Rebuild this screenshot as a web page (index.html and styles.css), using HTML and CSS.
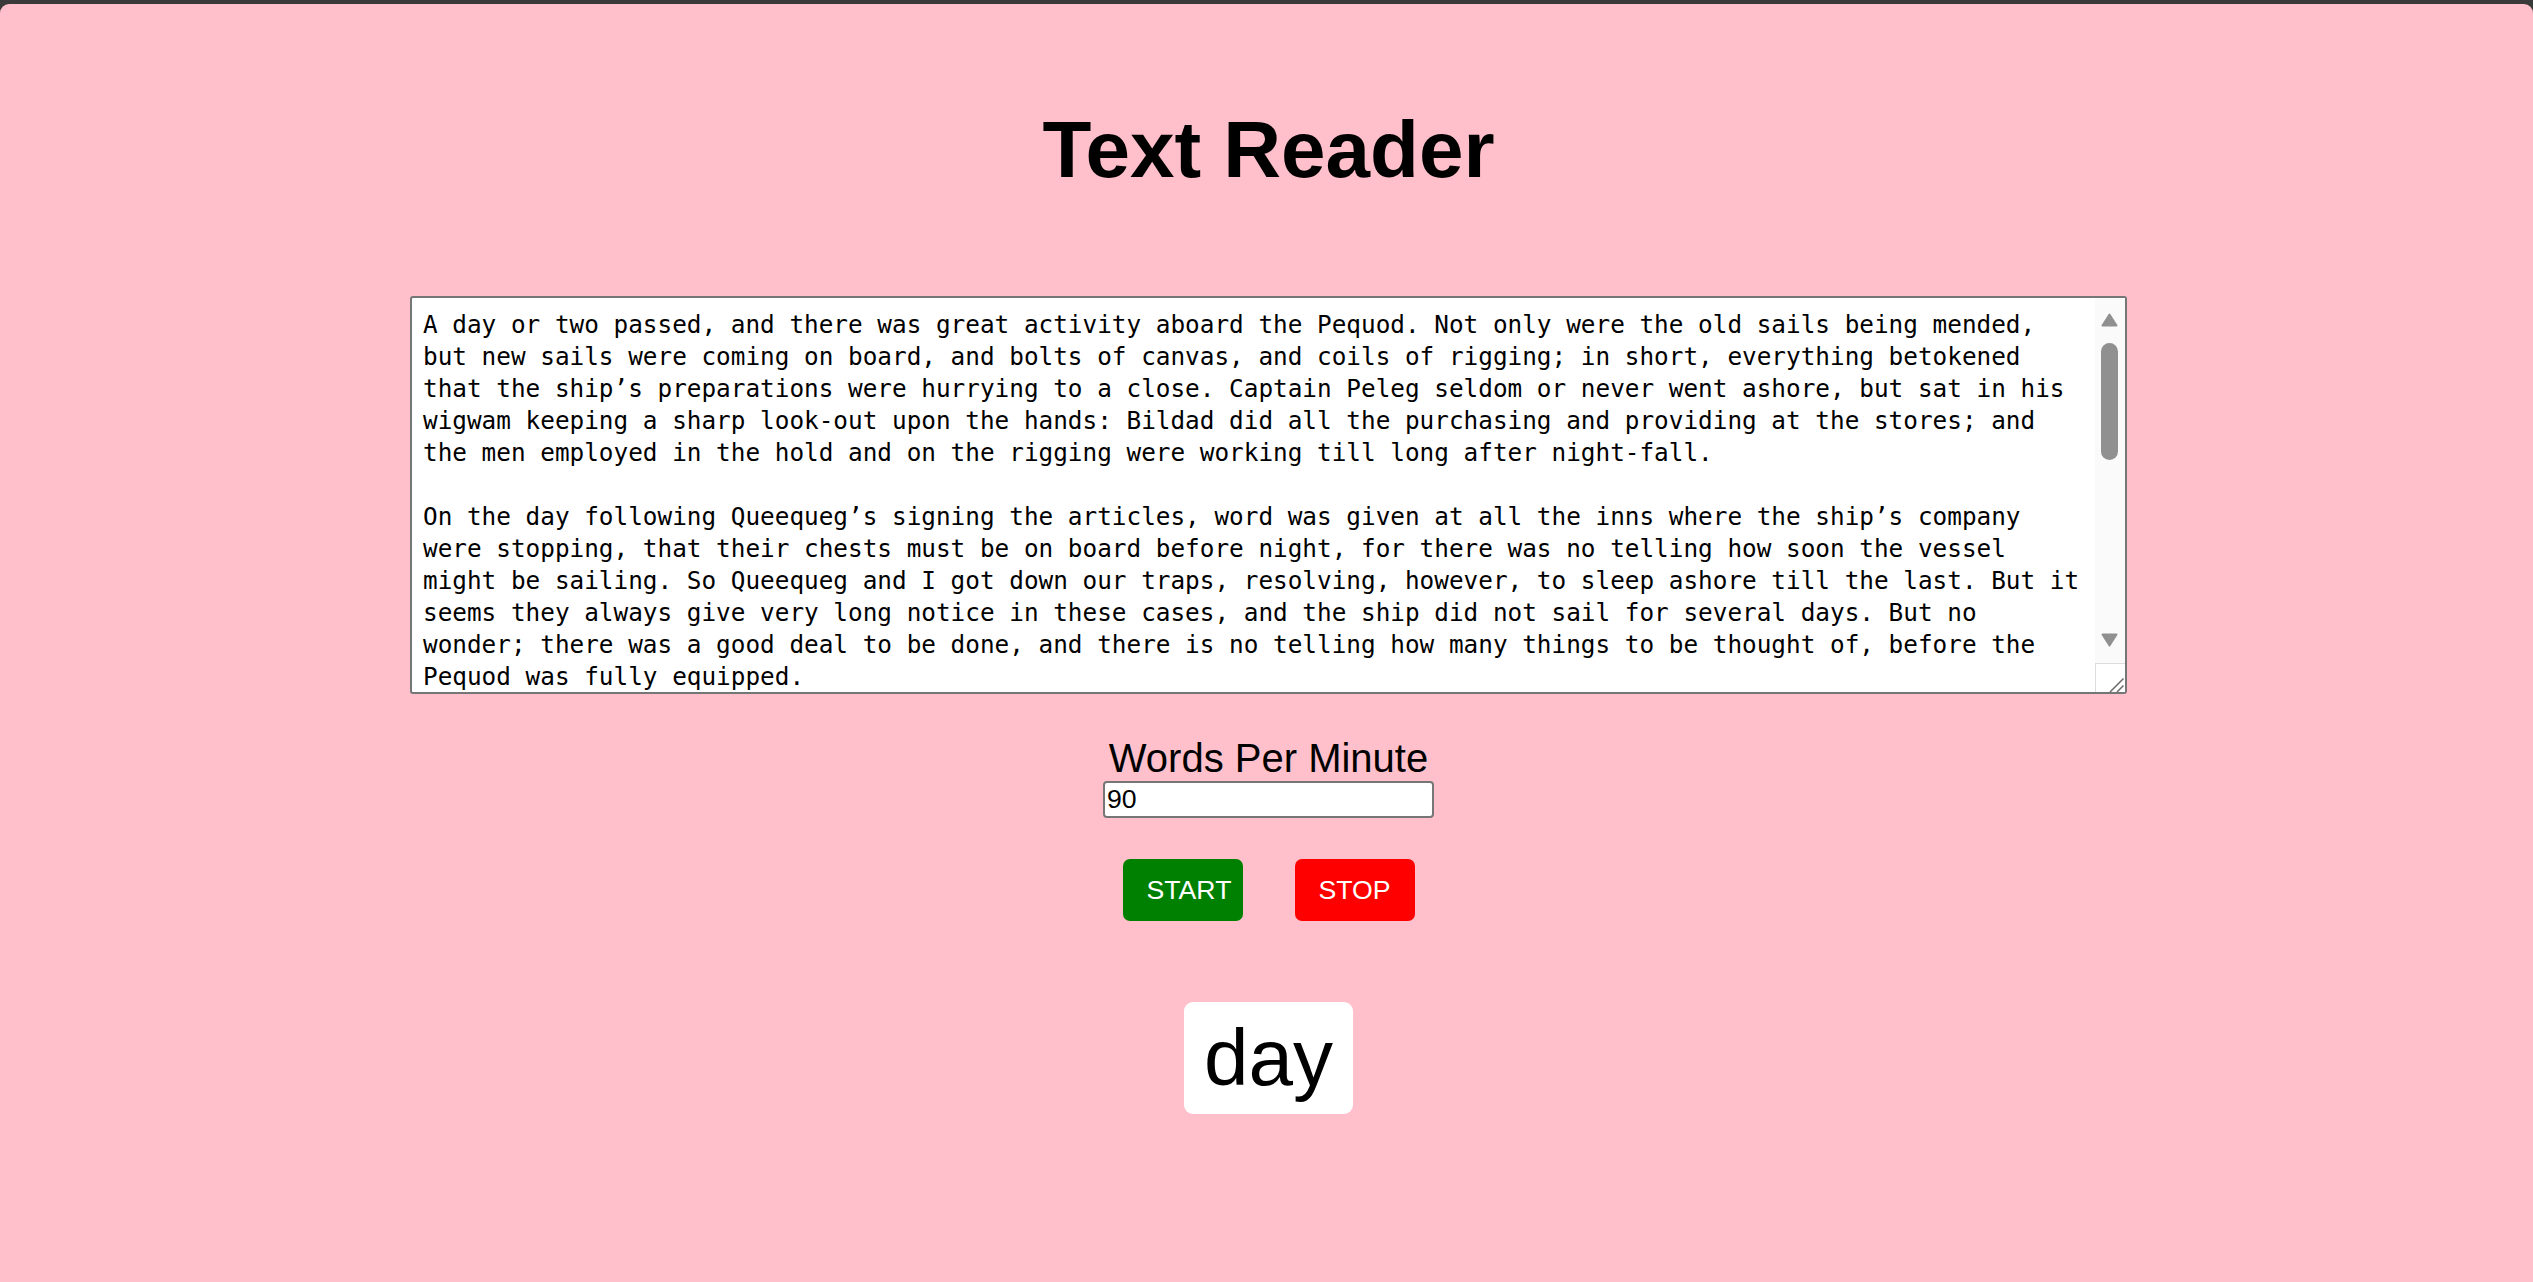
FILE: index.html
```html
<!DOCTYPE html>
<html lang="en">
<head>
<meta charset="utf-8">
<title>Text Reader</title>
<link rel="stylesheet" href="styles.css">
</head>
<body>
<main class="page">
  <h1 class="title">Text Reader</h1>
  <div class="editor">
    <textarea class="source" spellcheck="false">A day or two passed, and there was great activity aboard the Pequod. Not only were the old sails being mended, but new sails were coming on board, and bolts of canvas, and coils of rigging; in short, everything betokened that the ship’s preparations were hurrying to a close. Captain Peleg seldom or never went ashore, but sat in his wigwam keeping a sharp look-out upon the hands: Bildad did all the purchasing and providing at the stores; and the men employed in the hold and on the rigging were working till long after night-fall.

On the day following Queequeg’s signing the articles, word was given at all the inns where the ship’s company were stopping, that their chests must be on board before night, for there was no telling how soon the vessel might be sailing. So Queequeg and I got down our traps, resolving, however, to sleep ashore till the last. But it seems they always give very long notice in these cases, and the ship did not sail for several days. But no wonder; there was a good deal to be done, and there is no telling how many things to be thought of, before the Pequod was fully equipped.

Every one knows what a multitude of things—beds, sauce-pans, knives and forks, shovels and tongs, napkins, nut-crackers, and what not, are indispensable to the business of housekeeping. Just so with whaling, which necessitates a three-years’ housekeeping upon the wide ocean, far from all grocers, costermongers, doctors, bakers, and bankers. And though this also holds true of merchant vessels, yet not by any means to the same extent as with whalemen. For besides the great length of the whaling voyage, the numerous articles peculiar to the prosecution of the fishery, and the impossibility of replacing them at the remote harbors usually frequented, it must be remembered, that of all ships, whaling vessels are the most exposed to accidents of all kinds, and especially to the destruction and loss of the very things upon which the success of the voyage most depends. Hence, the spare boats, spare spars, and spare lines and harpoons, and spare everythings, almost, but a spare Captain and duplicate ship.

At the period of our arrival at the Island, the heaviest storage of the Pequod had been almost completed; comprising her beef, bread, water, fuel, and iron hoops and staves. But, as before hinted, for some time there was a continual fetching and carrying on board of divers odds and ends of things, both large and small.</textarea>
    <div class="scrollbar" aria-hidden="true">
      <div class="sb-btn sb-up">
        <svg class="sb-arrow" width="17" height="14" viewBox="0 0 17 14"><polygon points="8.5,1.5 15.5,12.5 1.5,12.5" fill="#909090" stroke="#909090" stroke-width="2" stroke-linejoin="round"/></svg>
      </div>
      <div class="sb-track"><div class="sb-thumb"></div></div>
      <div class="sb-btn sb-down">
        <svg class="sb-arrow" width="17" height="14" viewBox="0 0 17 14"><polygon points="1.5,1.5 15.5,1.5 8.5,12.5" fill="#909090" stroke="#909090" stroke-width="2" stroke-linejoin="round"/></svg>
      </div>
      <div class="sb-corner">
        <svg class="grip" width="29" height="29" viewBox="0 0 29 29"><line x1="14" y1="28" x2="27.5" y2="14.5" stroke="#6e6e6e" stroke-width="1.6"/><line x1="21" y1="28" x2="27.5" y2="21.5" stroke="#6e6e6e" stroke-width="1.6"/></svg>
      </div>
    </div>
  </div>
  <label class="wpm-label" for="wpm">Words Per Minute</label>
  <input class="wpm-input" id="wpm" type="text" value="90">
  <div class="controls">
    <button class="btn btn-start" type="button">START</button>
    <button class="btn btn-stop" type="button">STOP</button>
  </div>
  <div class="word">day</div>
</main>
</body>
</html>
```
FILE: styles.css
```css
html, body {
  margin: 0;
  padding: 0;
}

body {
  background: #3a3a3a;
  font-family: "Liberation Sans", Arial, sans-serif;
  color: #000;
}

.page {
  margin-top: 4px;
  min-height: calc(100vh - 4px);
  box-sizing: border-box;
  background: #ffc0cb;
  border-radius: 9px 9px 0 0;
  display: flex;
  flex-direction: column;
  align-items: center;
  padding: 100px 0 0 4px;
}

.title {
  margin: 0;
  font-family: "Liberation Sans", Arial, sans-serif;
  font-weight: 700;
  font-size: 80px;
  line-height: 92px;
}

.editor {
  position: relative;
  margin-top: 100px;
  width: 1717px;
  height: 398px;
}

.source {
  display: block;
  margin: 0;
  width: 100%;
  height: 100%;
  box-sizing: border-box;
  padding: 11px 41px 11px 11px;
  border: 2px solid #767676;
  border-radius: 3px;
  background: #fff;
  color: #000;
  font-family: "DejaVu Sans Mono", "Liberation Mono", monospace;
  font-size: 24.35px;
  line-height: 32px;
  overflow: hidden;
  resize: none;
  outline: none;
}

.scrollbar {
  position: absolute;
  top: 2px;
  right: 2px;
  bottom: 2px;
  width: 30px;
  display: flex;
  flex-direction: column;
  background: #fafafa;
}

.sb-btn {
  height: 45px;
  flex: none;
  display: flex;
  justify-content: center;
}

.sb-up {
  align-items: flex-start;
  padding-top: 15px;
  box-sizing: border-box;
}

.sb-down {
  align-items: flex-start;
  padding-top: 15px;
  box-sizing: border-box;
}

.sb-arrow {
  display: block;
  margin-left: -1px;
}

.sb-track {
  flex: 1;
}

.sb-thumb {
  width: 17px;
  height: 117px;
  margin-left: 6px;
  border-radius: 9px;
  background: #909090;
}

.sb-corner {
  flex: none;
  height: 29px;
  box-sizing: border-box;
  background: #fff;
  border-top: 1px solid #dcdcdc;
  border-left: 1px solid #dcdcdc;
}

.grip {
  display: block;
}

.wpm-label {
  display: block;
  margin-top: 41px;
  font-size: 40px;
  line-height: 46px;
}

.wpm-input {
  display: block;
  margin: 0;
  width: 331px;
  height: 37px;
  box-sizing: border-box;
  padding: 0 2px;
  border: 2px solid #767676;
  border-radius: 4px;
  background: #fff;
  color: #000;
  font-family: "Liberation Sans", Arial, sans-serif;
  font-size: 26.67px;
  outline: none;
}

.controls {
  display: flex;
  gap: 52px;
  margin-top: 41px;
}

.btn {
  width: 120px;
  height: 62px;
  box-sizing: border-box;
  padding: 0 24px;
  border: none;
  border-radius: 7px;
  color: #fff;
  font-family: "Liberation Sans", Arial, sans-serif;
  font-size: 26.67px;
  line-height: 31px;
  white-space: nowrap;
  cursor: pointer;
}

.btn-start {
  background: #008000;
}

.btn-stop {
  background: #ff0000;
}

.word {
  margin-top: 81px;
  padding: 10px 20px;
  background: #fff;
  border-radius: 9px;
  font-size: 80px;
  line-height: 92px;
}
```
